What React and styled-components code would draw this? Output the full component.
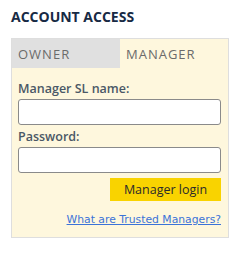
import React, { useState } from 'react';
import styled, { createGlobalStyle } from 'styled-components';

const GlobalStyle = createGlobalStyle`
  body {
    margin: 0;
    background: #fff;
    font-family: "Open Sans", "DejaVu Sans", sans-serif;
  }
`;

function App() {
  const [tab, setTab] = useState('manager');

  return (
    <Wrapper>
      <GlobalStyle />
      <Title>ACCOUNT ACCESS</Title>
      <Panel>
        <Tabs>
          <Tab active={tab === 'owner'} onClick={() => setTab('owner')}>
            OWNER
          </Tab>
          <Tab active={tab === 'manager'} onClick={() => setTab('manager')}>
            MANAGER
          </Tab>
        </Tabs>
        <Form>
          <Label>Manager SL name:</Label>
          <Input type='text' />
          <Label>Password:</Label>
          <Input type='password' />
          <ButtonRow>
            <LoginButton>Manager login</LoginButton>
          </ButtonRow>
          <LinkRow>
            <a href='#'>What are Trusted Managers?</a>
          </LinkRow>
        </Form>
      </Panel>
    </Wrapper>
  );
}

export default App;

const Wrapper = styled.div`
  padding: 9px 11px 0 11px;
  width: 218px;
`;

const Title = styled.h2`
  margin: 0 0 13px 0;
  font-size: 14px;
  font-weight: 700;
  color: #172a44;
  line-height: 16px;
`;

const Panel = styled.div`
  border: 1px solid #dedede;
  background: #fef7dd;
`;

const Tabs = styled.div`
  display: flex;
  height: 29px;
`;

const Tab = styled.div`
  flex: 1;
  display: flex;
  align-items: center;
  padding-left: 6px;
  font-size: 13px;
  letter-spacing: 1px;
  color: #6b6b6b;
  background: ${props => (props.active ? 'transparent' : '#e0e0e0')};
  cursor: pointer;
`;

const Form = styled.div`
  display: flex;
  flex-direction: column;
  padding: 13px 7px 11px 6px;
`;

const Label = styled.label`
  font-size: 12.5px;
  font-weight: 600;
  color: #4a5866;
  line-height: 16px;
  margin-bottom: 2px;
`;

const Input = styled.input`
  box-sizing: border-box;
  height: 26px;
  width: 100%;
  border: 1px solid #8a8a8a;
  border-radius: 3px;
  background: #fff;
  margin: 0 0 4px 0;
  padding: 0 4px;
`;

const ButtonRow = styled.div`
  display: flex;
  justify-content: flex-end;
  margin-top: 1px;
`;

const LoginButton = styled.button`
  width: 111px;
  height: 23px;
  border: none;
  background: #f9d300;
  color: #2a2a2a;
  font-family: "Open Sans", sans-serif;
  font-size: 12.5px;
  padding: 0;
  cursor: pointer;
`;

const LinkRow = styled.div`
  display: flex;
  justify-content: flex-end;
  margin-top: 12px;
  line-height: 13px;
  a {
    font-family: "DejaVu Sans", sans-serif;
    font-size: 10.8px;
    color: #3b73d8;
  }
`;
